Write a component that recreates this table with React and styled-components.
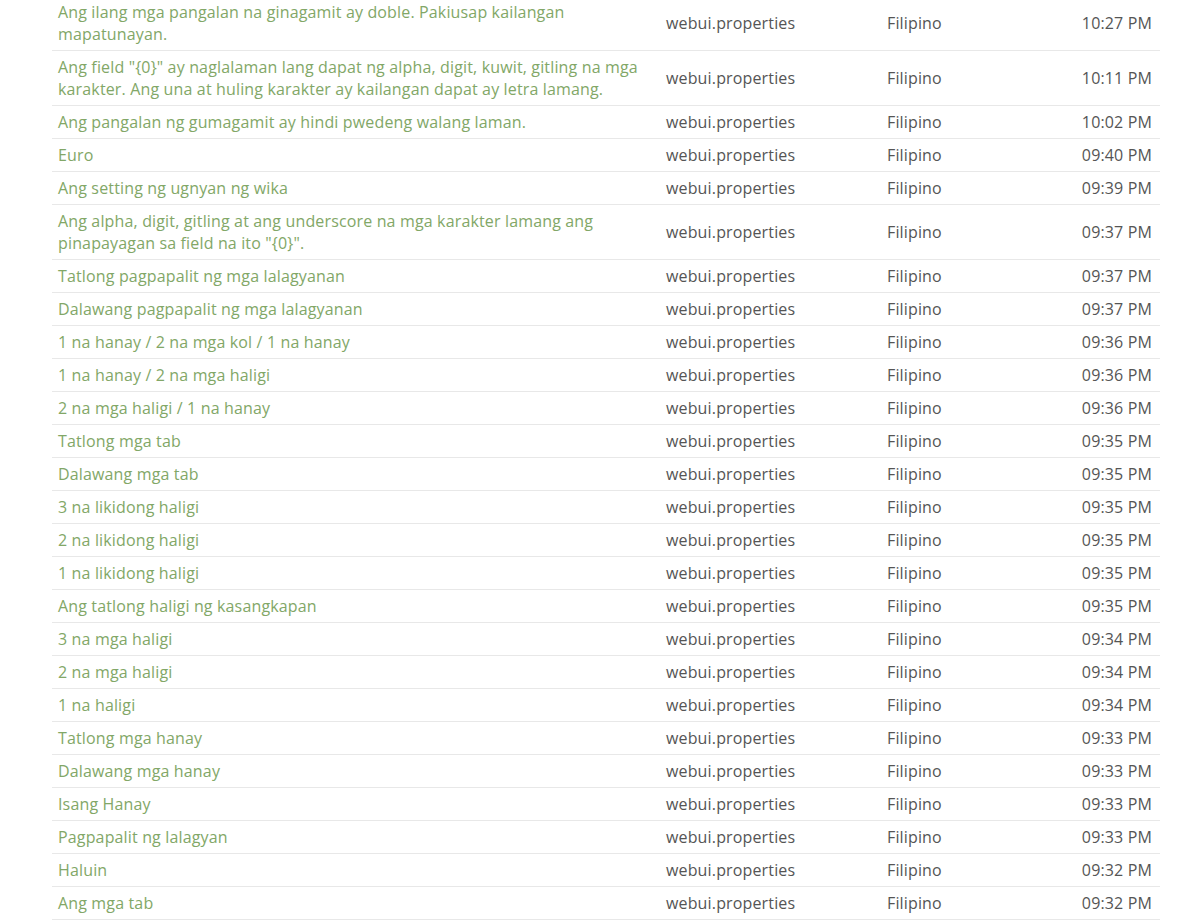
import React from 'react';
import styled, { createGlobalStyle } from 'styled-components';

const GlobalStyle = createGlobalStyle`
  body {
    margin: 0;
    background: #fff;
    font-family: "Open Sans", "Liberation Sans", sans-serif;
  }
`;

const Page = styled.div`
  padding-left: 52px;
  margin-top: -4px;
`;

const Table = styled.table`
  width: 1108px;
  border-collapse: collapse;
  table-layout: fixed;
  font-size: 16px;
  line-height: 22px;
  letter-spacing: 0.15px;
`;

const Row = styled.tr`
  border-bottom: 1px solid #e8e8e8;
`;

const Cell = styled.td`
  box-sizing: border-box;
  padding: 5px ${(p) => (p.$right ? '8px' : '6px')} 5px 6px;
  vertical-align: middle;
  color: ${(p) => (p.$link ? '#82a767' : '#555')};
  text-align: ${(p) => (p.$right ? 'right' : 'left')};
  width: ${(p) => p.$w || 'auto'};
`;

const rows = [
  ['Ang ilang mga pangalan na ginagamit ay doble. Pakiusap kailangan mapatunayan.', '10:27 PM'],
  ['Ang field "{0}" ay naglalaman lang dapat ng alpha, digit, kuwit, gitling na mga karakter. Ang una at huling karakter ay kailangan dapat ay letra lamang.', '10:11 PM'],
  ['Ang pangalan ng gumagamit ay hindi pwedeng walang laman.', '10:02 PM'],
  ['Euro', '09:40 PM'],
  ['Ang setting ng ugnyan ng wika', '09:39 PM'],
  ['Ang alpha, digit, gitling at ang underscore na mga karakter lamang ang pinapayagan sa field na ito "{0}".', '09:37 PM'],
  ['Tatlong pagpapalit ng mga lalagyanan', '09:37 PM'],
  ['Dalawang pagpapalit ng mga lalagyanan', '09:37 PM'],
  ['1 na hanay / 2 na mga kol / 1 na hanay', '09:36 PM'],
  ['1 na hanay / 2 na mga haligi', '09:36 PM'],
  ['2 na mga haligi / 1 na hanay', '09:36 PM'],
  ['Tatlong mga tab', '09:35 PM'],
  ['Dalawang mga tab', '09:35 PM'],
  ['3 na likidong haligi', '09:35 PM'],
  ['2 na likidong haligi', '09:35 PM'],
  ['1 na likidong haligi', '09:35 PM'],
  ['Ang tatlong haligi ng kasangkapan', '09:35 PM'],
  ['3 na mga haligi', '09:34 PM'],
  ['2 na mga haligi', '09:34 PM'],
  ['1 na haligi', '09:34 PM'],
  ['Tatlong mga hanay', '09:33 PM'],
  ['Dalawang mga hanay', '09:33 PM'],
  ['Isang Hanay', '09:33 PM'],
  ['Pagpapalit ng lalagyan', '09:33 PM'],
  ['Haluin', '09:32 PM'],
  ['Ang mga tab', '09:32 PM'],
];

export default function App() {
  return (
    <>
      <GlobalStyle />
      <Page>
        <Table>
          <tbody>
            {rows.map(([text, time], i) => (
              <Row key={i}>
                <Cell $link $w="608px">{text}</Cell>
                <Cell $w="221px">webui.properties</Cell>
                <Cell $w="150px">Filipino</Cell>
                <Cell $right>{time}</Cell>
              </Row>
            ))}
          </tbody>
        </Table>
      </Page>
    </>
  );
}
